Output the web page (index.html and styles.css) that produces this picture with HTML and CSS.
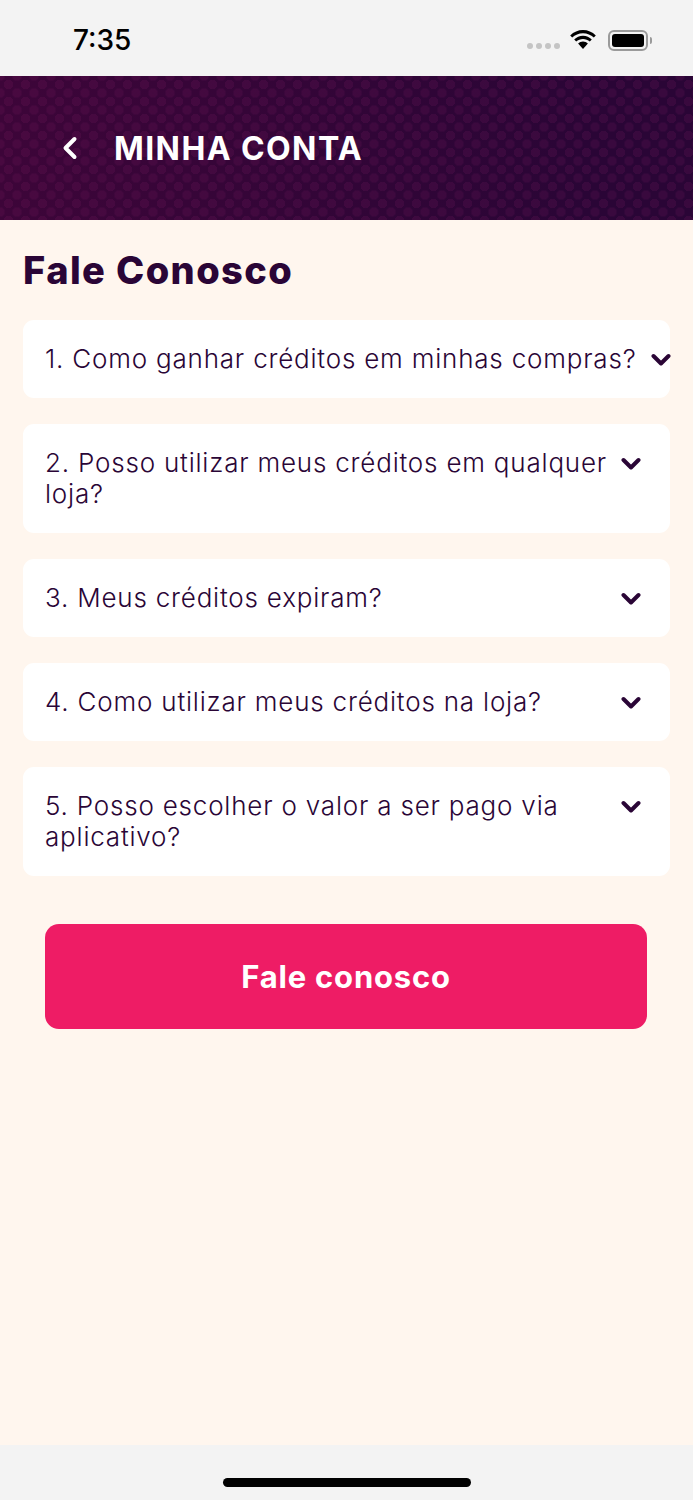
FILE: index.html
```html
<!DOCTYPE html>
<html lang="pt-BR">
<head>
  <meta charset="UTF-8" />
  <meta name="viewport" content="width=device-width, initial-scale=1.0"/>
  <title>Fale Conosco</title>
  <link rel="stylesheet" href="styles.css">
</head>
<body>
  <div class="app">
    <div class="status-bar">
      <span class="clock">7:35</span>
      <div class="status-icons">
        <div class="signal"><i></i><i></i><i></i><i></i></div>
        <svg class="wifi" width="28" height="20" viewBox="0 0 28 20">
          <path d="M14 3.2c4.2 0 8 1.6 10.800 4.300l2-2.100C23.300 2 18.900 0 14 0S4.700 2 1.200 5.400l2 2.100C6 4.800 9.800 3.200 14 3.200z"/>
          <path d="M14 8.900c2.600 0 5 1 6.800 2.700l2-2.100C20.500 7.200 17.400 5.800 14 5.800s-6.500 1.400-8.800 3.700l2 2.100C9 9.900 11.400 8.900 14 8.900z"/>
          <path d="M14 11.500c-1.900 0-3.600.8-4.900 2L14 19l4.900-5.500c-1.300-1.200-3-2-4.900-2z"/>
        </svg>
        <div class="battery"><div class="battery-fill"></div></div>
      </div>
    </div>

    <header class="top-bar">
      <svg class="back" width="16" height="24" viewBox="0 0 16 24">
        <path d="M12.500 3 3.500 12l9 9" fill="none" stroke="#fff" stroke-width="4" stroke-linecap="round" stroke-linejoin="round"/>
      </svg>
      <span class="top-title">MINHA CONTA</span>
    </header>

    <main class="content">
      <h1>Fale Conosco</h1>

      <div class="faq-list">
        <div class="faq-item faq-item-long">
          <span class="faq-text">1. Como ganhar créditos em minhas compras?</span>
          <svg class="chevron" width="20" height="14" viewBox="0 0 20 14"><path d="M2.500 3 10 10.500 17.500 3" fill="none" stroke="#2a0536" stroke-width="4" stroke-linecap="round" stroke-linejoin="round"/></svg>
        </div>
        <div class="faq-item">
          <span class="faq-text">2. Posso utilizar meus créditos em qualquer loja?</span>
          <svg class="chevron" width="20" height="14" viewBox="0 0 20 14"><path d="M2.500 3 10 10.500 17.500 3" fill="none" stroke="#2a0536" stroke-width="4" stroke-linecap="round" stroke-linejoin="round"/></svg>
        </div>
        <div class="faq-item">
          <span class="faq-text">3. Meus créditos expiram?</span>
          <svg class="chevron" width="20" height="14" viewBox="0 0 20 14"><path d="M2.500 3 10 10.500 17.500 3" fill="none" stroke="#2a0536" stroke-width="4" stroke-linecap="round" stroke-linejoin="round"/></svg>
        </div>
        <div class="faq-item">
          <span class="faq-text">4. Como utilizar meus créditos na loja?</span>
          <svg class="chevron" width="20" height="14" viewBox="0 0 20 14"><path d="M2.500 3 10 10.500 17.500 3" fill="none" stroke="#2a0536" stroke-width="4" stroke-linecap="round" stroke-linejoin="round"/></svg>
        </div>
        <div class="faq-item">
          <span class="faq-text">5. Posso escolher o valor a ser pago via aplicativo?</span>
          <svg class="chevron" width="20" height="14" viewBox="0 0 20 14"><path d="M2.500 3 10 10.500 17.500 3" fill="none" stroke="#2a0536" stroke-width="4" stroke-linecap="round" stroke-linejoin="round"/></svg>
        </div>
      </div>

      <button class="contact-btn">Fale conosco</button>
    </main>

    <div class="home-area"><div class="home-bar"></div></div>
  </div>
</body>
</html>
```

FILE: styles.css
```css
* {
  box-sizing: border-box;
}
body {
  margin: 0;
  font-family: "Inter", "Open Sans", sans-serif;
  background-color: #fff6ee;
  color: #2a0536;
}
.app {
  height: 1500px;
  display: flex;
  flex-direction: column;
}
.status-bar {
  height: 76px;
  background-color: #f3f3f3;
  display: flex;
  justify-content: space-between;
  align-items: center;
  padding: 4px 45px 0 73px;
  flex-shrink: 0;
}
.clock {
  font-size: 28px;
  font-weight: 500;
  color: #000;
}
.status-icons {
  display: flex;
  align-items: center;
}
.signal {
  display: flex;
  gap: 3px;
  margin: 12px 9px 0 0;
}
.signal i {
  width: 6px;
  height: 6px;
  border-radius: 50%;
  background-color: #c4c4c4;
}
.wifi {
  margin-right: 11px;
}
.battery {
  width: 40px;
  height: 21px;
  border: 2px solid #9a9a9a;
  border-radius: 6px;
  padding: 2px;
  position: relative;
}
.battery::after {
  content: "";
  position: absolute;
  right: -6px;
  top: 5px;
  width: 2px;
  height: 7px;
  border-radius: 0 2px 2px 0;
  background-color: #9a9a9a;
}
.battery-fill {
  height: 100%;
  background-color: #000;
  border-radius: 3px;
}
.top-bar {
  height: 144px;
  flex-shrink: 0;
  display: flex;
  align-items: center;
  padding-left: 62px;
  background-color: #2a0536;
  background-image:
    radial-gradient(circle, rgba(130,30,100,.17) 4.500px, transparent 5px),
    radial-gradient(circle, rgba(130,30,100,.17) 4.500px, transparent 5px),
    linear-gradient(90deg, #3d0539 0%, #2a0536 85%);
  background-size: 17px 17px, 17px 17px, auto;
  background-position: 0 0, 8.500px 8.500px, 0 0;
}
.top-title {
  margin-left: 36px;
  font-size: 32px;
  font-weight: 700;
  letter-spacing: 1.4px;
  color: #fff;
}
.content {
  flex: 1;
  padding: 0 23px;
}
h1 {
  margin: 26px 0 26px;
  font-size: 38px;
  line-height: 48px;
  font-weight: 800;
  letter-spacing: 1.4px;
}
.faq-list {
  display: flex;
  flex-direction: column;
  gap: 26px;
}
.faq-item {
  display: flex;
  align-items: flex-start;
  justify-content: space-between;
  background-color: #fff;
  border-radius: 11px;
  padding: 23px 29px 24px 22px;
  font-size: 26px;
  font-weight: 300;
  letter-spacing: 0.8px;
  line-height: 31px;
}
.faq-text {
  width: 572px;
}
.faq-item-long .faq-text {
  width: auto;
  white-space: nowrap;
}
.faq-item-long {
  padding-right: 0;
}
.faq-item-long .chevron {
  margin-right: -1px;
}
.chevron {
  flex-shrink: 0;
  margin-top: 10px;
}
.contact-btn {
  display: block;
  width: 602px;
  height: 105px;
  margin: 48px 0 0 22px;
  border: none;
  border-radius: 14px;
  background-color: #ee1c65;
  color: #fff;
  font-family: inherit;
  font-size: 31px;
  font-weight: 700;
  letter-spacing: 0.8px;
}
.home-area {
  height: 55px;
  flex-shrink: 0;
  background-color: #f3f3f3;
  display: flex;
  justify-content: center;
  padding-top: 33px;
}
.home-bar {
  width: 248px;
  height: 9px;
  border-radius: 5px;
  background-color: #000;
}
```
